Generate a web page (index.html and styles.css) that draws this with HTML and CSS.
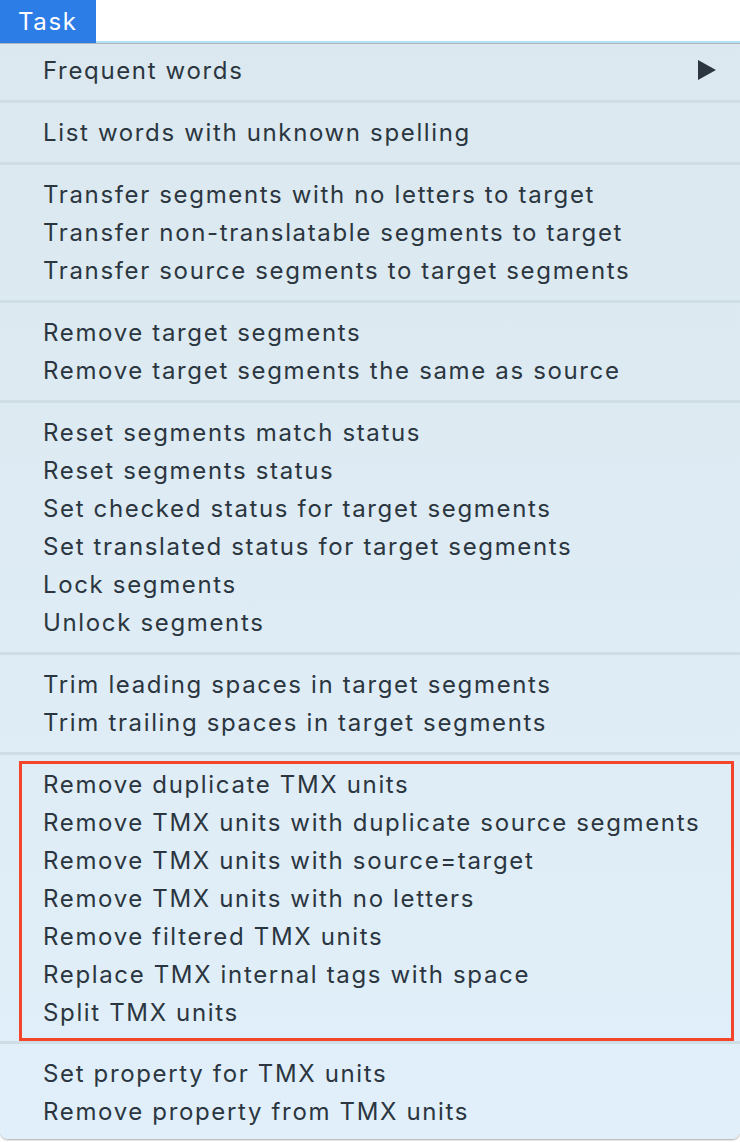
FILE: index.html
```html
<!DOCTYPE html>
<html lang="en">
<head>
    <meta charset="UTF-8">
    <title>Task menu</title>
    <link rel="stylesheet" href="styles.css">
</head>
<body>

    <!-- Barre du haut -->
    <header class="menubar">
        <div class="menubar-title">Task</div>
        <div class="menubar-rest"></div>
    </header>

    <!-- Menu déroulant -->
    <div class="menu">
        <div class="group">
            <div class="item">Frequent words <span class="arrow"></span></div>
        </div>
        <div class="group">
            <div class="item">List words with unknown spelling</div>
        </div>
        <div class="group">
            <div class="item">Transfer segments with no letters to target</div>
            <div class="item">Transfer non-translatable segments to target</div>
            <div class="item">Transfer source segments to target segments</div>
        </div>
        <div class="group">
            <div class="item">Remove target segments</div>
            <div class="item">Remove target segments the same as source</div>
        </div>
        <div class="group">
            <div class="item">Reset segments match status</div>
            <div class="item">Reset segments status</div>
            <div class="item">Set checked status for target segments</div>
            <div class="item">Set translated status for target segments</div>
            <div class="item">Lock segments</div>
            <div class="item">Unlock segments</div>
        </div>
        <div class="group">
            <div class="item">Trim leading spaces in target segments</div>
            <div class="item">Trim trailing spaces in target segments</div>
        </div>
        <div class="group group-marked">
            <div class="marked">
                <div class="item">Remove duplicate TMX units</div>
                <div class="item">Remove TMX units with duplicate source segments</div>
                <div class="item">Remove TMX units with source=target</div>
                <div class="item">Remove TMX units with no letters</div>
                <div class="item">Remove filtered TMX units</div>
                <div class="item">Replace TMX internal tags with space</div>
                <div class="item">Split TMX units</div>
            </div>
        </div>
        <div class="group group-last">
            <div class="item">Set property for TMX units</div>
            <div class="item">Remove property from TMX units</div>
        </div>
    </div>

</body>
</html>
```

FILE: styles.css
```css
/* Page */
body {
    margin: 0;
    height: 1142px;
    background: #ffffff;
    font-family: "Inter", "Liberation Sans", sans-serif;
    color: #2b3640;
    overflow: hidden;
}

/* Barre du haut */
.menubar {
    display: flex;
    height: 43px;
    border-bottom: 1px solid #b2babf;
}

.menubar-title {
    width: 96px;
    background: #2d7de6;
    color: #ffffff;
    font-size: 24px;
    letter-spacing: 1.6px;
    line-height: 43px;
    padding-left: 18px;
    box-sizing: border-box;
}

.menubar-rest {
    flex: 1;
    border-bottom: 2px solid #b5e1f6;
}

/* Menu */
.menu {
    background: linear-gradient(#dbe8ef, #e1effa);
    border-radius: 0 0 8px 8px;
    box-shadow: 0 1px 2px rgba(0, 0, 0, 0.35);
}

.group {
    padding: 10px 0 11px;
    border-bottom: 3px solid #cfdde5;
}

.group:first-child {
    padding-top: 7px;
}

.group-last {
    border-bottom: none;
    padding-bottom: 9px;
}

.group-marked {
    padding: 6px 6px 0 19px;
}

.marked {
    border: 3px solid #f2452a;
    padding: 1px 0 7px;
}

.item {
    position: relative;
    height: 38px;
    line-height: 39px;
    padding-left: 43px;
    font-size: 24px;
    letter-spacing: 1.65px;
    white-space: nowrap;
}

.marked .item {
    padding-left: 21px;
}

/* Flèche du sous-menu */
.arrow {
    position: absolute;
    right: 24px;
    top: 9px;
    width: 0;
    height: 0;
    border-top: 10px solid transparent;
    border-bottom: 10px solid transparent;
    border-left: 18px solid #2b3640;
}
```
